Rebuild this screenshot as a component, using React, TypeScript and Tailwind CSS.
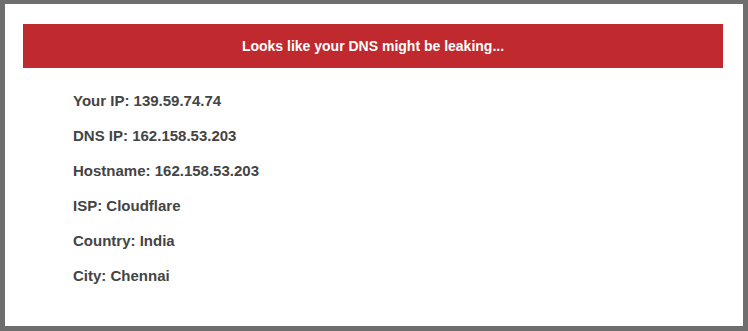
const ROWS = [
  { label: "Your IP", value: "139.59.74.74" },
  { label: "DNS IP", value: "162.158.53.203" },
  { label: "Hostname", value: "162.158.53.203" },
  { label: "ISP", value: "Cloudflare" },
  { label: "Country", value: "India" },
  { label: "City", value: "Chennai" },
];

export default function App() {
  return (
    <div
      className="h-[331px] w-[748px] border-x-[5px] border-t-[4px] border-b-[5px] border-[#6e6e6e] bg-white"
      style={{ fontFamily: '"Liberation Sans", Arial, sans-serif' }}
    >
      <div className="ml-[18px] mr-[20px] mt-[20px] flex h-[44px] items-center justify-center bg-[#c0292d]">
        <p className="text-[14px] font-bold text-white">Looks like your DNS might be leaking...</p>
      </div>
      <ul className="mt-[15px] pl-[68px]">
        {ROWS.map((row) => (
          <li key={row.label} className="text-[15px] leading-[35px] font-bold text-[#444444]">
            {row.label}: {row.value}
          </li>
        ))}
      </ul>
    </div>
  );
}
